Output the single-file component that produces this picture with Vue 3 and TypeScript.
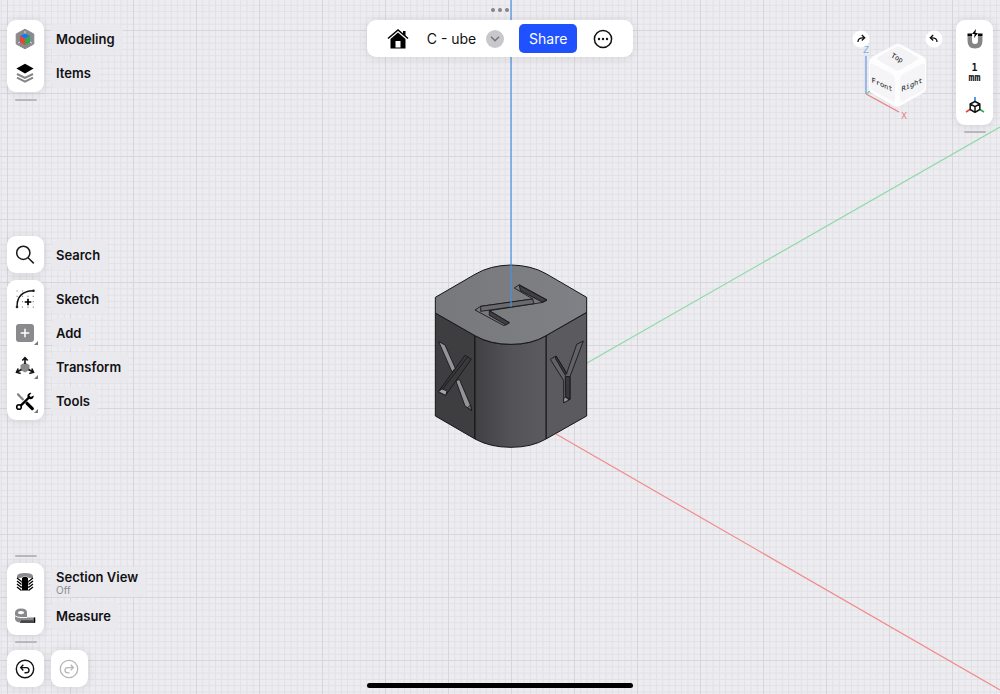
<script setup lang="ts">
import { ref } from 'vue'

interface Tool {
  id: string
  label: string
  note?: string
  more?: boolean
}

const workspace: Tool[] = [
  { id: 'modeling', label: 'Modeling' },
  { id: 'items', label: 'Items' },
]
const search: Tool[] = [{ id: 'search', label: 'Search' }]
const editing: Tool[] = [
  { id: 'sketch', label: 'Sketch' },
  { id: 'add', label: 'Add', more: true },
  { id: 'transform', label: 'Transform', more: true },
  { id: 'tools', label: 'Tools', more: true },
]
const inspection: Tool[] = [
  { id: 'section', label: 'Section View', note: 'Off' },
  { id: 'measure', label: 'Measure' },
]

const groups = {
  top: [workspace],
  middle: [search, editing],
  bottom: [inspection],
}

const active = ref('modeling')
const subdivisions = Array.from({ length: 9 }, (_, i) => (i + 1) * 6.3)
</script>

<template>
  <div class="app">
    <svg class="scene" viewBox="0 0 1000 694" preserveAspectRatio="xMidYMid slice" aria-hidden="true">
      <defs>
        <pattern id="grid" x="7" y="30" width="63" height="63" patternUnits="userSpaceOnUse">
          <path
            v-for="s in subdivisions"
            :key="s"
            :d="`M${s + 0.5} 0V63M0 ${s + 0.5}H63`"
            stroke="#e1e1e6"
            stroke-width="1"
          />
          <path d="M.5 0V63M0 .5H63" stroke="#d6d6db" stroke-width="1" />
        </pattern>
        <linearGradient id="round" x1="0" x2="1" y1="0" y2="0">
          <stop offset="0" stop-color="#414144" />
          <stop offset=".5" stop-color="#535357" />
          <stop offset="1" stop-color="#5b5b60" />
        </linearGradient>
        <linearGradient id="lid" x1="0" x2="1" y1="0" y2="0">
          <stop offset="0" stop-color="#77787b" />
          <stop offset="1" stop-color="#808186" />
        </linearGradient>
      </defs>
      <rect width="1000" height="694" fill="#ededf1" />
      <rect width="1000" height="694" fill="url(#grid)" />
      <path d="M587 363L1000 127" stroke="#8ed9a8" stroke-width="1.2" />
      <path d="M556 434L1000 690" stroke="#f28b8b" stroke-width="1.2" />

      <g transform="translate(420 255) scale(.33333)" stroke="#151517" stroke-width="3" stroke-linejoin="round">
        <path d="M46 174L165 242V552L46 483Z" fill="#3e3e41" />
        <path d="M378 242L500 172V483L378 552Z" fill="#5a5a5f" />
        <path d="M165 242Q205 268 273 268Q339 268 378 242V552Q335 577 273 577Q210 577 165 552Z" fill="url(#round)" />
        <path d="M46 127L165 58Q210 31 273 30Q334 31 378 56L500 127V172L378 242Q335 268 273 268Q210 268 165 242L46 174Z" fill="url(#lid)" />

        <g stroke-width="2.5">
          <path d="M283 99L298 89L381 135L370 142L208 167L268 203L252 212L165 165L182 154L338 132Z" fill="#79797d" />
          <path d="M298 91L381 135L366 141L301 107Z" fill="#3f3f42" />
          <path d="M182 154L338 132L342 146L182 169Z" fill="#6a6a6e" />
          <path d="M208 167L268 203L258 210L208 181Z" fill="#3f3f42" />

          <path d="M56 260L75 270L106 340L96 351Z" fill="#949498" />
          <path d="M108 378L118 373L151 450L155 466L135 453Z" fill="#949498" />
          <path d="M135 301L154 312L77 421L55 410Z" fill="#39393c" />
          <path d="M142 307L66 404" fill="none" />
          <path d="M66 402L81 408L77 421L55 410Z" fill="#a4a4a8" />
          <path d="M151 450L143 458L155 466Z" fill="#77777b" />

          <path d="M391 313L408 303L440 355L470 268L490 258L450 365V433L431 443V377Z" fill="#626267" />
          <path d="M408 303L440 355L436 361L406 310Z" fill="#39393c" />
          <path d="M436 364L450 365V433L437 426Z" fill="#39393c" />
          <path d="M431 430L437 427L447 435L431 443Z" fill="#9a9a9e" />
        </g>
      </g>
      <path d="M511 0V307" stroke="#4a90df" stroke-width="1.2" />
    </svg>

    <nav class="sidebar" aria-label="Tools">
      <div v-for="(panels, place) in groups" :key="place" class="group" :class="place">
        <span v-if="place === 'bottom'" class="handle" />
        <div v-for="(panel, n) in panels" :key="n" class="panel" :class="{ single: panel.length === 1 }">
          <button v-for="tool in panel" :key="tool.id" type="button" class="tool" @click="active = tool.id">
            <span class="tool-icon">
              <svg width="24" height="24" viewBox="0 0 24 24" fill="none" aria-hidden="true">
                <template v-if="tool.id === 'modeling'">
                  <path d="M12 2.2L20.8 7V17L12 21.8L3.2 17V7Z" fill="#8a8a8d" stroke="#8a8a8d" stroke-linejoin="round" />
                  <path d="M12 6.5L17 9L12 11.7L7 9Z" fill="#1679e8" />
                  <path d="M7 9L12 11.7V18L7 15.3Z" fill="#e94438" />
                  <path d="M17 9L12 11.7V18L17 15.3Z" fill="#2aad50" />
                  <path d="M12 4V6.5M5 16.2L7 15.1M19 16.2L17 15.1" stroke="#ddd" />
                </template>
                <template v-else-if="tool.id === 'items'">
                  <path d="M4 16.7L12 20.6L20 16.7M4 13L12 17L20 13" stroke="#858588" stroke-width="2" />
                  <path d="M12 2.8L20.6 7.6L12 12.6L3.4 7.6Z" fill="#000" />
                </template>
                <template v-else-if="tool.id === 'search'">
                  <circle cx="10.3" cy="9.8" r="6.6" stroke="#1b1b1d" stroke-width="1.5" />
                  <path d="M15 14.7L20.8 20.4" stroke="#1b1b1d" stroke-width="1.5" />
                </template>
                <template v-else-if="tool.id === 'sketch'">
                  <path d="M3.5 4H21M3.5 9.3H21M3.5 14.7H21M3.5 20.2H21" stroke="#8e8e91" stroke-width="1.2" stroke-dasharray="1.2 4.2" />
                  <path d="M4 20Q4 4 20.5 3.8" stroke="#111" stroke-width="1.4" />
                  <circle cx="4" cy="20" r="1.3" fill="#222" />
                  <circle cx="20.5" cy="3.8" r="1.3" fill="#222" />
                  <path d="M15 11.7V18.3M11.7 15H18.3" stroke="#000" stroke-width="1.7" />
                </template>
                <template v-else-if="tool.id === 'add'">
                  <rect x="3" y="3" width="18" height="18" rx="3" fill="#8a8a8d" />
                  <path d="M12 7.7V16.3M7.7 12H16.3" stroke="#fff" stroke-width="1.5" />
                </template>
                <template v-else-if="tool.id === 'transform'">
                  <path d="M12 7.5L16.5 10V15L12 17.5L7.5 15V10Z" fill="#8a8a8d" />
                  <path d="M12 9V3M9.3 5.5L12 2.7L14.7 5.5M8.5 14.5L4 17M5.2 13.5L3.5 17.3L7.7 18.5M15.5 14.5L20 17M18.8 13.5L20.5 17.3L16.3 18.5" stroke="#111" stroke-width="1.6" />
                </template>
                <template v-else-if="tool.id === 'tools'">
                  <path d="M4.5 5L10.5 11" stroke="#858588" stroke-width="2.2" />
                  <path d="M4 4L7 5.2L5.3 7Z" fill="#858588" />
                  <path d="M14 14.3L19.3 19.6" stroke="#000" stroke-width="3.2" stroke-linecap="round" />
                  <path d="M7.5 16.8L16.5 8" stroke="#000" stroke-width="2.4" />
                  <circle cx="6" cy="18" r="2.3" stroke="#000" stroke-width="1.6" />
                  <path d="M18.4 4A3.2 3.2 0 1 0 20.7 6.6L17.8 8L16.3 6.5Z" fill="#000" />
                </template>
                <template v-else-if="tool.id === 'section'">
                  <path d="M4 8V6Q4.5 3 12 3Q19.5 3 20 6V8H16Q12 4.5 8 8Z" fill="#8a8a8d" />
                  <path d="M9 8Q12 5.5 15 8V11L16 12L15 13V16L16 17L15 18V20.5H9V18L8 17L9 16V13L8 12L9 11Z" fill="#000" />
                  <path d="M4 8L8.5 11.5M4 11L8.5 14.5M4 14L8.5 17.5M4 17L8.5 20.5M20 8L15.5 11.5M20 11L15.5 14.5M20 14L15.5 17.5M20 17L15.5 20.5" stroke="#000" stroke-width="1.3" />
                </template>
                <template v-else>
                  <path d="M2 9Q2 4.5 8 4.5Q14 4.5 14 8.5V13.5H22V18.5H8Q2 18.5 2 14.5Z" fill="#8a8a8d" />
                  <ellipse cx="8" cy="8.6" rx="3" ry="1.7" fill="#fff" />
                  <path d="M2 11.8Q4 13.5 8 13.5H14" stroke="#fff" />
                  <path d="M9 18.4V16M11 18.4V16M13 18.4V16M15 18.4V16M17 18.4V16M19 18.4V16M7 18.2H22" stroke="#222" stroke-width="1" />
                  <path d="M21.5 13.5V18.7" stroke="#000" stroke-width="1.5" />
                </template>
              </svg>
              <i v-if="tool.more" class="more" />
            </span>
            <span class="label">{{ tool.label }}<small v-if="tool.note">{{ tool.note }}</small></span>
          </button>
        </div>
        <span v-if="place !== 'middle'" class="handle" />
        <div v-if="place === 'bottom'" class="history">
          <button type="button" class="square" aria-label="Undo">
            <svg width="20" height="20" viewBox="0 0 20 20" fill="none" stroke="#111" stroke-width="1.4">
              <circle cx="10" cy="10" r="8.7" />
              <path d="M8.3 5.8L5.7 8.6L8.3 11.4M5.9 8.6H11.5Q14 8.8 14 11.2Q14 13.8 11 13.8H9.5" />
            </svg>
          </button>
          <button type="button" class="square" aria-label="Redo" disabled>
            <svg width="20" height="20" viewBox="0 0 20 20" fill="none" stroke="#b5b5b7" stroke-width="1.3">
              <circle cx="10" cy="10" r="8.7" />
              <path d="M11.7 5.8L14.3 8.6L11.7 11.4M14.1 8.6H8.5Q6 8.8 6 11.2Q6 13.8 9 13.8H10.5" />
            </svg>
          </button>
        </div>
      </div>
    </nav>

    <main class="center">
      <div class="head">
        <div class="dots"><i /><i /><i /></div>
        <header class="bar">
          <button type="button" class="plain" aria-label="Home">
            <svg width="22" height="22" viewBox="0 0 22 22" fill="none">
              <path d="M1 10.5L11 2L21 10.5" stroke="#000" stroke-width="1.6" />
              <path d="M16 3H18.5V8L16 6Z" fill="#000" />
              <path d="M3.5 11L11 4.6L18.5 11V20.5H3.5Z" fill="#000" />
              <rect x="8.5" y="13" width="5" height="6.5" fill="#fff" />
            </svg>
          </button>
          <span class="title">C - ube</span>
          <button type="button" class="chevron" aria-label="Document menu">
            <svg width="10" height="6" viewBox="0 0 10 6" fill="none"><path d="M1 .8L5 4.8L9 .8" stroke="#737376" stroke-width="1.4" /></svg>
          </button>
          <button type="button" class="share">Share</button>
          <button type="button" class="plain" aria-label="More">
            <svg width="20" height="20" viewBox="0 0 20 20">
              <circle cx="10" cy="10" r="8.6" fill="none" stroke="#111" stroke-width="1.5" />
              <g fill="#111"><circle cx="6" cy="10" r="1.2" /><circle cx="10" cy="10" r="1.2" /><circle cx="14" cy="10" r="1.2" /></g>
            </svg>
          </button>
        </header>
      </div>
      <div class="home-indicator" />
    </main>

    <aside class="right">
      <svg class="view-cube" width="98" height="100" viewBox="848 25 98 100" role="img" aria-label="View orientation">
        <g fill="none" stroke-width="1.3">
          <path d="M866 94V56" stroke="#6f9ee6" />
          <path d="M866 94L899 112" stroke="#e98080" />
          <path d="M866 94L870 91" stroke="#7ecb98" />
        </g>
        <text x="863" y="53" class="axis" fill="#85ace8">Z</text>
        <text x="901" y="119" class="axis" fill="#e98080">X</text>
        <path d="M896 44Q898 43 900 44L924 57Q926 58 926 61V88Q926 91 923 93L900 106Q897 107 894 106L872 93Q869 91 869 88V62Q869 59 872 57Z" fill="#fdfdfe" />
        <path d="M896 47Q898 46 900 47L917 57Q919 58 917 60L900 70Q897 71 895 70L878 60Q876 58 878 57Z" fill="#f3f3f6" />
        <path d="M870 65Q870 63 873 64L892 74Q895 76 895 79V99Q895 103 892 101L873 91Q870 89 870 86Z" fill="#f5f5f8" />
        <path d="M925 65Q925 63 922 64L903 74Q900 76 900 79V99Q900 103 903 101L922 91Q925 89 925 86Z" fill="#f5f5f8" />
        <g class="face">
          <text transform="translate(896 60) rotate(28)" text-anchor="middle">Top</text>
          <text transform="translate(882 87) skewY(24)" text-anchor="middle">Front</text>
          <text transform="translate(912 87) skewY(-24)" text-anchor="middle">Right</text>
        </g>
        <circle cx="861" cy="39" r="8.5" fill="#fff" />
        <circle cx="934" cy="39" r="8.5" fill="#fff" />
        <g fill="none" stroke="#111" stroke-width="1.3">
          <path d="M858 42Q858 37.5 863.5 37.8M861.8 35L864.7 37.8L861.8 40.5" />
          <path d="M937 42Q937 37.5 931.5 37.8M933.2 35L930.3 37.8L933.2 40.5" />
        </g>
      </svg>
      <div class="settings">
        <div class="panel options">
          <button type="button" class="plain" aria-label="Snapping">
            <svg width="20" height="22" viewBox="0 0 20 22" fill="none">
              <path d="M4.8 8V13Q4.8 18.2 10 18.2Q15.2 18.2 15.2 13V8" stroke="#858588" stroke-width="4.5" />
              <path d="M2.5 6.8H7.1M12.9 6.8H17.5" stroke="#000" stroke-width="2.4" />
              <path d="M11 1L7 6H9.7L9 10L13 5H10.4Z" fill="#000" />
            </svg>
          </button>
          <button type="button" class="plain unit"><span>1</span><span>mm</span></button>
          <button type="button" class="plain" aria-label="Axes">
            <svg width="20" height="20" viewBox="0 0 20 20" fill="none" stroke-width="1.5">
              <path d="M10 1V6" stroke="#1679e8" />
              <path d="M5 13.5L1 16" stroke="#e94438" />
              <path d="M15 13.5L19 16" stroke="#2aad50" />
              <path d="M10 5.5L14.8 8V13.5L10 16.3L5.2 13.5V8ZM5.2 8L10 10.7L14.8 8M10 10.7V16.3" stroke="#111" stroke-linejoin="round" />
            </svg>
          </button>
        </div>
        <span class="handle" />
      </div>
    </aside>
  </div>
</template>

<style>
body {
  margin: 0;
}
</style>

<style scoped>
.app {
  position: relative;
  display: grid;
  grid-template-columns: 1fr auto 1fr;
  min-height: 100vh;
  overflow: hidden;
  color: #111113;
  font-family: Inter, "Liberation Sans", sans-serif;
}
.scene {
  position: absolute;
  inset: 0;
  width: 100%;
  height: 100%;
}
button {
  margin: 0;
  padding: 0;
  border: 0;
  background: none;
  color: inherit;
  font: inherit;
  cursor: pointer;
}
svg {
  display: block;
}
.sidebar,
.center,
.right {
  position: relative;
  display: flex;
}
.sidebar {
  flex-direction: column;
  justify-content: space-between;
  padding: 20px 7px 7px;
}
.group {
  display: flex;
  flex-direction: column;
  align-items: flex-start;
  gap: 7px;
}
.bottom {
  gap: 6px;
}
.panel,
.square,
.bar {
  background: #fff;
  border-radius: 9px;
  box-shadow: 0 1px 8px rgba(40, 40, 60, 0.12);
}
.panel {
  box-sizing: border-box;
  width: 37px;
  padding: 2px 0;
}
.tool {
  display: flex;
  align-items: center;
  gap: 8px;
  width: max-content;
  height: 34px;
}
.single {
  padding: 0;
}
.single .tool {
  height: 37px;
}
.tool-icon {
  position: relative;
  display: grid;
  place-items: center;
  width: 36px;
  height: 34px;
}
.more {
  position: absolute;
  right: 5px;
  bottom: 5px;
  border-left: 4px solid transparent;
  border-bottom: 4px solid #77777a;
}
.label {
  display: flex;
  flex-direction: column;
  justify-content: center;
  min-height: 30px;
  padding: 0 8px 0 5px;
  border-radius: 6px;
  background: rgba(233, 233, 237, 0.85);
  font-size: 13px;
  font-weight: 600;
  line-height: 16px;
  text-align: left;
}
.label small {
  color: #8a8a8e;
  font-size: 10px;
  font-weight: 400;
  line-height: 10px;
}
.handle {
  width: 22px;
  height: 2px;
  margin-left: 8px;
  border-radius: 1px;
  background: #b8b8bc;
}
.history {
  display: flex;
  gap: 7px;
  padding-top: 1px;
}
.square {
  display: grid;
  place-items: center;
  box-sizing: border-box;
  width: 37px;
  height: 37px;
  padding-right: 1px;
}
.center {
  flex-direction: column;
  justify-content: space-between;
  padding: 8px 0 6px;
}
.dots {
  display: flex;
  justify-content: center;
  gap: 3px;
  height: 12px;
}
.dots i {
  width: 4px;
  height: 4px;
  border-radius: 50%;
  background: #858589;
}
.bar {
  display: flex;
  align-items: center;
  box-sizing: border-box;
  height: 37px;
  padding: 0 20px;
}
.title {
  margin: 0 10px 0 18px;
  font-size: 14px;
}
.chevron {
  display: grid;
  place-items: center;
  width: 18px;
  height: 18px;
  border-radius: 50%;
  background: #c8c8cb;
}
.share {
  width: 58px;
  height: 29px;
  margin: 0 16px 0 15px;
  border-radius: 5px;
  background: #1f51ff;
  color: #fff;
  font-size: 14px;
}
.home-indicator {
  height: 5px;
  border-radius: 3px;
  background: #000;
}
.right {
  align-items: flex-start;
  justify-content: flex-end;
  gap: 10px;
  padding: 20px 7px 0 0;
}
.view-cube {
  margin-top: 5px;
}
.axis {
  font-family: "DejaVu Sans", sans-serif;
  font-size: 9px;
}
.face {
  fill: #151517;
  font-family: "DejaVu Sans Mono", monospace;
  font-size: 7px;
}
.settings {
  display: flex;
  flex-direction: column;
  gap: 6px;
}
.options {
  display: flex;
  flex-direction: column;
  align-items: center;
  justify-content: space-between;
  height: 105px;
  padding: 8px 0 9px;
}
.unit {
  display: flex;
  flex-direction: column;
  align-items: center;
  font-family: "DejaVu Sans Mono", monospace;
  font-size: 10px;
  font-weight: 700;
  line-height: 10px;
}
</style>
